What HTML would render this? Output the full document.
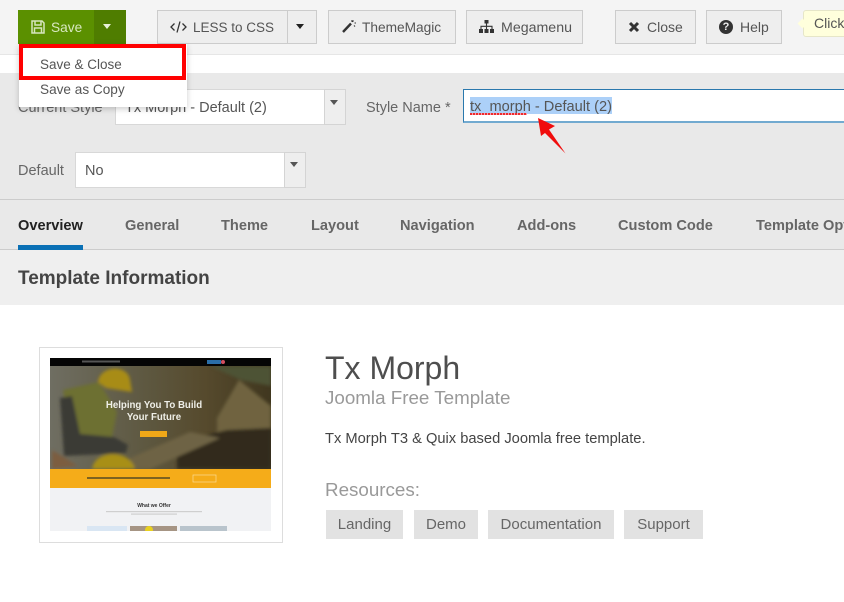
<!DOCTYPE html>
<html><head><meta charset="utf-8"><style>
html,body{margin:0;padding:0;background:#fff}
#p{position:relative;width:844px;height:602px;overflow:hidden;background:#fff;font-family:"Liberation Sans",sans-serif;color:#555;font-size:14px;filter:blur(.35px)}
#p div,#p svg{position:absolute}
.t{white-space:nowrap;line-height:18px}
.btn{background:#eee;border:1px solid #ccc;box-sizing:border-box;height:34px;top:10px}
.tab{top:217px;font-size:14.6px;font-weight:bold;color:#666;white-space:nowrap;line-height:18px}
.tag{background:#e2e2e2;top:510px;height:29px;line-height:29px;text-align:center;color:#666;font-size:15px}
</style></head><body><div id="p">
<div style="left:0;top:0;width:844px;height:55px;background:#f4f4f4;border-bottom:1px solid #e6e6e6;box-sizing:border-box"></div>
<div style="left:0;top:73px;width:844px;height:127px;background:#e9e9e9;border-bottom:1px solid #ccc;box-sizing:border-box"></div>
<div style="left:0;top:200px;width:844px;height:50px;background:#e9e9e9;border-bottom:1px solid #ccc;box-sizing:border-box"></div>
<div style="left:0;top:250px;width:844px;height:55px;background:#efefef"></div>

<div style="left:18px;top:10px;width:76px;height:34px;background:#5b9000"></div>
<div style="left:94px;top:10px;width:32px;height:34px;background:#4f7d00"></div>
<svg style="left:31px;top:20px" width="14" height="14" viewBox="0 0 14 14"><path d="M1 1h10l2 2v10H1zM4 1.500v3.500h6V1.500M3.500 13V8h7v5" fill="none" stroke="#d6e6bd" stroke-width="1.500"/></svg>
<div class="t" style="left:51px;top:19px;color:#d8e8c0;font-size:13.700px">Save</div>
<div style="left:103px;top:24px;border-left:4.500px solid transparent;border-right:4.500px solid transparent;border-top:5px solid #e8f0d8"></div>

<div class="btn" style="left:157px;width:131px"></div>
<div class="btn" style="left:287px;width:30px"></div>
<svg style="left:170px;top:21px" width="17" height="12" viewBox="0 0 17 12"><path d="M4.500 2.500 1 6l3.500 3.500M12.500 2.500 16 6l-3.500 3.500M10 .5 7 11.500" fill="none" stroke="#333" stroke-width="1.300"/></svg>
<div class="t" style="left:193px;top:19px;color:#555;font-size:13.500px">LESS to CSS</div>
<div style="left:296px;top:24px;border-left:4.500px solid transparent;border-right:4.500px solid transparent;border-top:5px solid #222"></div>

<div class="btn" style="left:328px;width:128px"></div>
<svg style="left:342px;top:19px" width="14" height="14" viewBox="0 0 14 14"><path d="M1 13 9 4.500" stroke="#333" stroke-width="2.400" fill="none"/><path d="M10 1v2M12.500 4h1.500M11.500 1.500 10.500 3M12 6.500l1 1" stroke="#333" stroke-width="1.100" fill="none"/></svg>
<div class="t" style="left:362px;top:19px;font-size:13.700px">ThemeMagic</div>

<div class="btn" style="left:466px;width:117px"></div>
<svg style="left:479px;top:20px" width="15" height="13" viewBox="0 0 15 13"><path d="M5.500 0h4v3.500h-4zM0 9h4v4H0zM5.500 9h4v4h-4zM11 9h4v4h-4z" fill="#333"/><path d="M7.500 3.500V9M2 9V6.300h11V9" fill="none" stroke="#333" stroke-width="1.100"/></svg>
<div class="t" style="left:501px;top:19px;font-size:14.200px">Megamenu</div>

<div class="btn" style="left:615px;width:81px"></div>
<svg style="left:628px;top:21px" width="12" height="12" viewBox="0 0 12 12"><path d="M2 2l8 8M10 2l-8 8" stroke="#333" stroke-width="3" fill="none"/></svg>
<div class="t" style="left:647px;top:18px">Close</div>

<div class="btn" style="left:706px;width:76px"></div>
<div style="left:719px;top:20px;width:14px;height:14px;border-radius:50%;background:#333;color:#eee;font-size:11px;font-weight:bold;line-height:14px;text-align:center">?</div>
<div class="t" style="left:740px;top:18px">Help</div>

<div style="left:803px;top:10px;width:60px;height:27px;background:#ffffdc;border:1px solid #e6e6c8;box-sizing:border-box;border-radius:3px"></div>
<div style="left:799px;top:20px;width:7px;height:7px;background:#ffffdc;transform:rotate(45deg)"></div>
<div class="t" style="left:814px;top:14px;color:#555">Click</div>

<div class="t" style="left:18px;top:99px;color:#666;font-size:14.500px">Current Style</div>
<div style="left:115px;top:89px;width:231px;height:36px;background:#fff;border:1px solid #d8d8d8;box-sizing:border-box"></div>
<div style="left:324px;top:89px;width:22px;height:36px;background:#eee;border:1px solid #d4d4d4;box-sizing:border-box"></div>
<div style="left:330px;top:100px;border-left:4.500px solid transparent;border-right:4.500px solid transparent;border-top:5px solid #555"></div>
<div class="t" style="left:125px;top:99px;font-size:14.500px">Tx Morph - Default (2)</div>

<div class="t" style="left:366px;top:99px;color:#666;font-size:14.500px">Style Name *</div>
<div style="left:463px;top:89px;width:390px;height:34px;background:#fff;border:1px solid #2a78ad;border-bottom:2px solid #72aad0;box-sizing:border-box"></div>
<div style="left:470px;top:97px;width:142px;height:17px;background:#acd0f8"></div>
<div class="t" style="left:470px;top:98px;color:#555;font-size:14.600px">tx_morph - Default (2)</div>
<div style="left:470px;top:113px;width:57px;height:1.500px;background:repeating-linear-gradient(90deg,#ee2b2b 0 2px,#f4a0b0 2px 3px)"></div>

<svg style="left:536px;top:116px" width="34" height="40" viewBox="0 0 34 40"><path d="M2 2 19 10l-6 3.500L29.500 37.500 9 17l-4 3z" fill="#f00d0d"/></svg>

<div class="t" style="left:18px;top:162px;color:#666;font-size:14.500px">Default</div>
<div style="left:75px;top:152px;width:231px;height:36px;background:#fff;border:1px solid #d8d8d8;box-sizing:border-box"></div>
<div style="left:284px;top:152px;width:22px;height:36px;background:#eee;border:1px solid #d4d4d4;box-sizing:border-box"></div>
<div style="left:290px;top:162px;border-left:4.500px solid transparent;border-right:4.500px solid transparent;border-top:5px solid #555"></div>
<div class="t" style="left:85px;top:162px;font-size:14.500px">No</div>

<div style="left:19px;top:44px;width:168px;height:63px;background:#fff;box-shadow:0 2px 6px rgba(0,0,0,.2)"></div>
<div style="left:19px;top:44px;width:167px;height:36px;border:4px solid #f00;box-sizing:border-box;background:#fff"></div>
<div class="t" style="left:40px;top:56px;color:#555;font-size:13.500px">Save &amp; Close</div>
<div class="t" style="left:40px;top:81px;color:#555;font-size:13.600px">Save as Copy</div>

<div class="tab" style="left:18px;color:#222">Overview</div>
<div style="left:18px;top:245px;width:65px;height:5px;background:#0a70b5"></div>
<div class="tab" style="left:125px">General</div>
<div class="tab" style="left:221px">Theme</div>
<div class="tab" style="left:311px">Layout</div>
<div class="tab" style="left:400px">Navigation</div>
<div class="tab" style="left:517px">Add-ons</div>
<div class="tab" style="left:618px">Custom Code</div>
<div class="tab" style="left:756px">Template Options</div>

<div class="t" style="left:18px;top:268px;font-size:19px;font-weight:bold;color:#444;line-height:22px">Template Information</div>

<div style="left:39px;top:347px;width:244px;height:196px;background:#fff;border:1px solid #ddd;box-sizing:border-box"></div>
<svg style="left:50px;top:358px" width="221" height="173" viewBox="0 0 221 173">
<defs>
<linearGradient id="h" x1="0" x2="1" y1="0" y2="0"><stop offset="0" stop-color="#6f6e62"/><stop offset=".45" stop-color="#5d573f"/><stop offset=".7" stop-color="#564a2d"/><stop offset="1" stop-color="#40371f"/></linearGradient>
<filter id="b" x="-10%" y="-10%" width="120%" height="120%"><feGaussianBlur stdDeviation="1.500"/></filter>
<clipPath id="c"><rect y="8" width="221" height="103"/></clipPath>
</defs>
<rect width="221" height="173" fill="#f1f2f4"/>
<rect y="8" width="221" height="103" fill="url(#h)"/>
<g clip-path="url(#c)"><g filter="url(#b)">
<path d="M160 8h61v20l-30-6z" fill="#4d5236"/>
<path d="M167 60l22-38 32 26v30h-54z" fill="#6f6440"/>
<path d="M127 84l50-12 44-2v41H127z" fill="#33291a"/>
<path d="M80 100l60-26 30 6-70 31H80z" fill="#6e6345"/>
<path d="M13 32l36-8 18 30-6 30-38 4z" fill="#6d7030"/>
<path d="M10 40l12-2 8 38 34 3 14 8-2 8-62 3z" fill="#3a3a34"/>
<path d="M48 24c2-17 30-18 32-2l2 12-26-4z" fill="#a88c14"/>
<path d="M42 111c3-20 38-20 43 0z" fill="#a88f18"/>
<path d="M2 92l26 16-26 3z" fill="#7c5d40"/>
</g></g>
<rect width="221" height="8" fill="#050505"/>
<rect y="111" width="221" height="19" fill="#f5ac19"/>
<rect x="90" y="73" width="27" height="6" fill="#f0a818"/>
<rect x="37" y="119" width="83" height="2" fill="#7d6220"/>
<rect x="143" y="117" width="23" height="7" fill="none" stroke="#fbdc96" stroke-width=".7"/>
<rect x="32" y="2.500" width="38" height="2" fill="#555"/>
<rect x="157" y="2" width="14" height="4" fill="#2a6ea8"/><circle cx="173" cy="4" r="2" fill="#d34f60"/>
<text x="104" y="50" text-anchor="middle" font-family="Liberation Sans" font-size="9.700" font-weight="bold" fill="#efefe8">Helping You To Build</text>
<text x="104" y="62" text-anchor="middle" font-family="Liberation Sans" font-size="9.700" font-weight="bold" fill="#efefe8">Your Future</text>
<text x="104" y="149" text-anchor="middle" font-family="Liberation Sans" font-size="5" font-weight="bold" fill="#333">What we Offer</text>
<rect x="56" y="153" width="96" height="1.200" fill="#cfcfcf"/><rect x="81" y="155.500" width="46" height="1.200" fill="#cfcfcf"/>
<rect x="37" y="168" width="40" height="5" fill="#d9e6f3"/><rect x="80" y="168" width="47" height="5" fill="#a69584"/><rect x="130" y="168" width="47" height="5" fill="#b9c4cc"/>
<circle cx="99" cy="172" r="4" fill="#e8d020"/>
</svg>

<div class="t" style="left:325px;top:350px;font-size:32px;line-height:36px;color:#4e4e4e">Tx Morph</div>
<div class="t" style="left:325px;top:387px;font-size:18.800px;line-height:22px;color:#999">Joomla Free Template</div>
<div class="t" style="left:325px;top:430px;font-size:14.700px;color:#444">Tx Morph T3 &amp; Quix based Joomla free template.</div>
<div class="t" style="left:325px;top:479px;font-size:18.800px;line-height:22px;color:#999">Resources:</div>
<div class="tag" style="left:326px;width:77px">Landing</div>
<div class="tag" style="left:414px;width:64px">Demo</div>
<div class="tag" style="left:488px;width:126px">Documentation</div>
<div class="tag" style="left:624px;width:79px">Support</div>
</div></body></html>
